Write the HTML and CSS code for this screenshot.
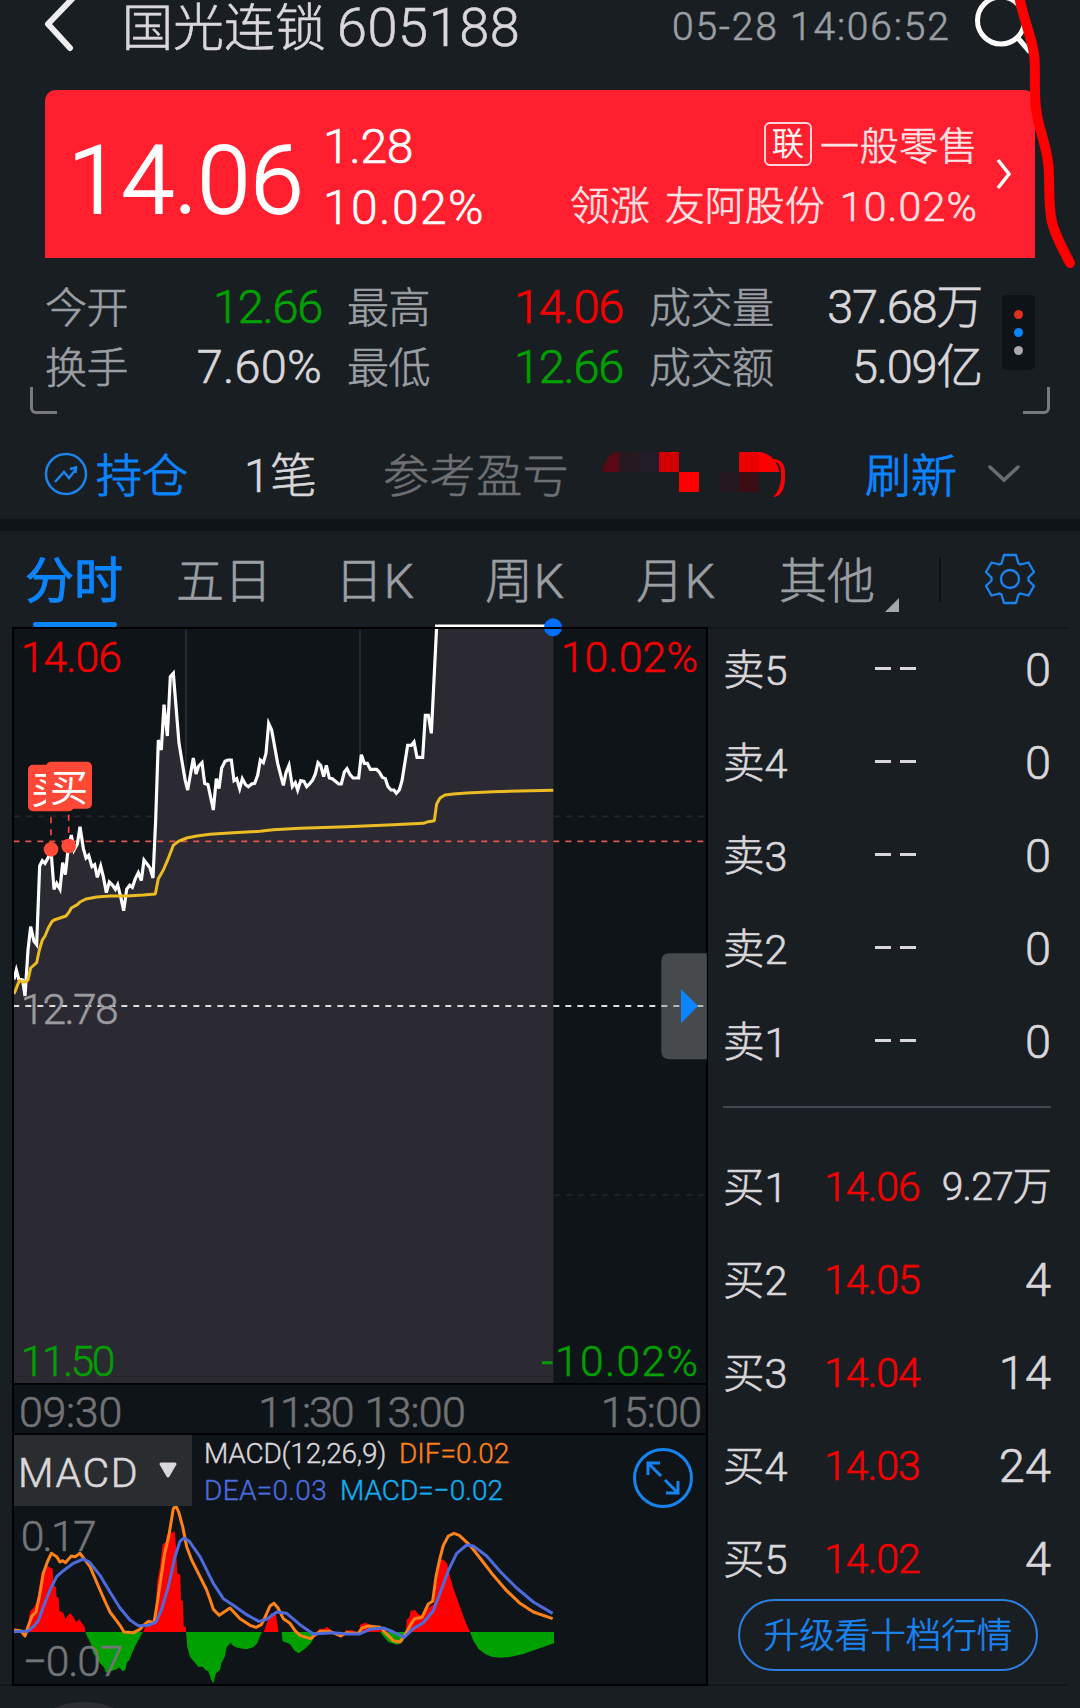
FILE: index.html
```
<!DOCTYPE html>
<html lang="zh-CN">
<head>
  <meta charset="UTF-8" />
  <meta name="viewport" content="width=device-width, initial-scale=1.0" />
  <title>国光连锁 605188</title>
  <link rel="stylesheet" href="styles.css">
</head>
<body>
  <div class="page">
    <header class="topbar">
      <svg class="back" viewBox="0 0 34 60"><path d="M30 -2 L5 24 L27 48" /></svg>
      <h1 class="name">国光连锁</h1>
      <span class="code">605188</span>
      <span class="time">05-28 14:06:52</span>
      <svg class="search" viewBox="0 0 62 60"><circle cx="27" cy="20.5" r="23.5" /><path d="M43 37 L56 52" /></svg>
    </header>

    <section class="quote">
      <div class="price">14.06</div>
      <div class="change">
        <span class="diff">1.28</span>
        <span class="pct">10.02%</span>
      </div>
      <div class="sector">
        <div class="sector-row"><span class="tag">联</span><span class="sector-name">一般零售</span></div>
        <div class="sector-row lead"><span>领涨</span><span>友阿股份</span><span class="lead-pct">10.02%</span></div>
      </div>
      <svg class="arrow" viewBox="0 0 18 34"><path d="M3 3 L14 17 L3 31" /></svg>
    </section>

    <section class="stats">
      <div class="stats-grid">
        <span class="label">今开</span><span class="val green">12.66</span>
        <span class="label">最高</span><span class="val red">14.06</span>
        <span class="label">成交量</span><span class="val">37.68万</span>
        <span class="label">换手</span><span class="val turnover">7.60%</span>
        <span class="label">最低</span><span class="val green">12.66</span>
        <span class="label">成交额</span><span class="val">5.09亿</span>
      </div>
      <div class="more"><i class="dot-red"></i><i class="dot-blue"></i><i class="dot-grey"></i></div>
      <i class="corner corner-left"></i>
      <i class="corner corner-right"></i>
    </section>

    <section class="position">
      <svg class="hold-icon" viewBox="0 0 42 42">
        <circle cx="21" cy="21" r="20" />
        <path d="M10 29 L19 19 L24 25 L31 16 M25 16 L31 14.500 L30.500 20" />
      </svg>
      <span class="hold">持仓</span>
      <span class="count">1笔</span>
      <span class="profit">参考盈亏</span>
      <svg class="mosaic" viewBox="0 0 186 46">
        <path fill="#5a0814" d="M0 21 Q5 1 17 1 V21 Z" />
        <path fill="#261920" d="M17 1h20v20H17z" />
        <path fill="#231d2a" d="M37 1h20v20H37z" />
        <path fill="#d20000" d="M57 1h20v20H57z" />
        <path fill="#ff0000" d="M77 21h20v20H77z" />
        <path fill="#261820" d="M117 21h20v20h-20z" />
        <path fill="#3a0d14" d="M137 21h20v20h-20z" />
        <path fill="#ea0000" d="M137 1h20v20h-20z" />
        <path fill="#ff0000" d="M157 1 Q167 2 171 8 Q183 8 183 22 Q184 45 171 46 Q180 38 179 22 Q179 12 173 11 Q177 15 177 21 H157 Z" />
      </svg>
      <span class="refresh">刷新</span>
      <svg class="down" viewBox="0 0 34 20"><path d="M3 3 L17 16 L31 3" /></svg>
    </section>

    <nav class="tabs">
      <a class="tab active">分时</a>
      <a class="tab tab-5d">五日</a>
      <a class="tab tab-k">日K</a>
      <a class="tab tab-wk">周K</a>
      <a class="tab tab-mk">月K</a>
      <a class="tab tab-other">其他</a>
      <i class="tab-split"></i>
      <svg class="gear" viewBox="-26 -26 52 52">
        <path d="M-6 -24 H6 L8.500 -15.500 L10.500 -14.500 L18.500 -16.500 L24 -7 L18.500 -1.500 V1.500 L24 7 L18.500 16.500 L10.500 14.500 L8.500 15.500 L6 24 H-6 L-8.500 15.500 L-10.500 14.500 L-18.500 16.500 L-24 7 L-18.500 1.500 V-1.500 L-24 -7 L-18.500 -16.500 L-10.500 -14.500 L-8.500 -15.500 Z" />
        <circle r="9" />
      </svg>
    </nav>

    <main class="main">
      <div class="charts">
        <!-- 分时图, 3 units per pixel -->
        <svg class="trend" viewBox="36 21 2088 2274">
          <rect class="panel" x="39" y="24" width="2082" height="2268" />
          <path class="grid" d="M558 28V1500 M1080 28V1500" />
          <path class="grid-dash" d="M42 589H2112 M42 1725H2112" />
          <path class="area" d="M42,1078 49,1050 56,1076 68,1080 75,1128 84,990 92,920 102,964 110,974 119,738 127,722 135,730 145,712 153,690 162,808 170,790 180,808 188,728 196,764 204,690 214,645 222,690 232,672 240,620 250,685 258,714 266,706 276,740 284,734 292,772 302,738 310,770 319,818 328,786 338,796 346,808 353,794 362,830 371,872 380,808 389,796 397,802 406,776 415,758 424,782 432,720 440,730 450,744 459,774 467,600 475,360 484,390 492,254 502,348 511,170 520,160 537,370 555,478 563,510 580,414 588,462 596,438 606,428 614,490 624,494 640,570 649,476 657,506 665,444 675,424 684,420 694,420 702,482 710,476 719,506 727,476 737,494 745,500 755,492 764,490 773,466 781,420 790,428 798,400 806,310 815,330 833,430 850,496 858,458 867,436 877,500 886,488 893,510 902,482 912,484 920,500 930,490 938,480 946,462 954,428 962,436 971,470 979,436 988,474 997,476 1016,492 1024,492 1033,456 1041,446 1050,464 1059,474 1076,474 1084,404 1093,430 1102,430 1111,448 1130,448 1139,458 1147,472 1156,476 1164,500 1173,510 1182,510 1189,520 1198,510 1206,482 1223,376 1234,376 1242,366 1251,412 1268,412 1276,286 1285,286 1294,340 1310,18 1660,18 1660,2289 42,2289Z" />
          <path class="cost-line" d="M42 664H2112" />
          <path class="base-line" d="M42 1158H2112" />
          <path class="price-line" d="M42,1078 49,1050 56,1076 68,1080 75,1128 84,990 92,920 102,964 110,974 119,738 127,722 135,730 145,712 153,690 162,808 170,790 180,808 188,728 196,764 204,690 214,645 222,690 232,672 240,620 250,685 258,714 266,706 276,740 284,734 292,772 302,738 310,770 319,818 328,786 338,796 346,808 353,794 362,830 371,872 380,808 389,796 397,802 406,776 415,758 424,782 432,720 440,730 450,744 459,774 467,600 475,360 484,390 492,254 502,348 511,170 520,160 537,370 555,478 563,510 580,414 588,462 596,438 606,428 614,490 624,494 640,570 649,476 657,506 665,444 675,424 684,420 694,420 702,482 710,476 719,506 727,476 737,494 745,500 755,492 764,490 773,466 781,420 790,428 798,400 806,310 815,330 833,430 850,496 858,458 867,436 877,500 886,488 893,510 902,482 912,484 920,500 930,490 938,480 946,462 954,428 962,436 971,470 979,436 988,474 997,476 1016,492 1024,492 1033,456 1041,446 1050,464 1059,474 1076,474 1084,404 1093,430 1102,430 1111,448 1130,448 1139,458 1147,472 1156,476 1164,500 1173,510 1182,510 1189,520 1198,510 1206,482 1223,376 1234,376 1242,366 1251,412 1268,412 1276,286 1285,286 1294,340 1310,18 1660,18" />
          <path class="avg-line" d="M42,1122 58,1082 68,1086 78,1085 84,1080 92,1044 110,1028 118,990 127,960 135,948 145,924 155,906 162,900 180,894 198,888 206,878 214,864 232,854 240,846 258,837 290,831 330,828 380,828 430,825 466,822 475,776 490,750 505,715 520,676 535,664 560,654 590,648 630,643 700,638 780,634 820,629 900,625 1040,620 1180,614 1270,610 1285,605 1303,602 1310,552 1320,534 1335,525 1360,522 1400,519 1480,515 1660,511" />
          <circle class="last" cx="1659" cy="22" r="27" />
          <path class="frame" d="M39 24H2121V2292H39Z" />
          <!-- 买入点 -->
          <path class="buy-stem" d="M153 592V666 M206 584V656" />
          <circle class="buy" cx="153" cy="688" r="22" /><circle class="buy" cx="206" cy="678" r="22" />
          <rect class="buy" x="84" y="434" width="138" height="140" rx="15" />
          <text class="buy-text" x="94" y="550">买</text>
          <rect class="buy" x="138" y="425" width="138" height="141" rx="15" />
          <text class="buy-text" x="150" y="543">买</text>

          <text class="tick red" x="62" y="155" textLength="304">14.06</text>
          <text class="tick red" x="1682" y="155" textLength="412">10.02%</text>
          <text class="tick mid" x="62" y="1212" textLength="294">12.78</text>
          <text class="tick green" x="62" y="2267" textLength="284">11.50</text>
          <text class="tick green" x="1624" y="2267" textLength="470">-10.02%</text>
          <path class="handle" d="M2121 1000H2009Q1984 1000 1984 1025V1293Q1984 1318 2009 1318H2121Z" />
          <path class="handle-arrow" d="M2043 1107L2094 1158L2043 1210Z" />
        </svg>

        <div class="axis"><span>09:30</span><span class="t-mid">11:30</span><span class="t-mid2">13:00</span><span class="t-end">15:00</span></div>

        <div class="macd">
          <svg class="macd-chart" viewBox="36 219 2088 759">
            <rect class="panel" x="39" y="222" width="2082" height="753" />
            <path class="down-bars" d="M256,816 262,830 272,850 280,880 290,895 300,910 312,922 318,938 350,928 358,922 368,934 376,930 380,910 388,900 396,880 404,862 412,846 420,832 428,816Z M558,816 562,862 570,890 585,908 595,920 608,920 616,930 625,934 634,960 640,970 648,940 660,930 664,910 674,890 680,862 692,848 700,858 715,864 740,868 760,862 772,850 780,828 786,816Z M845,816 848,844 870,852 884,872 896,880 915,866 930,852 940,838 946,816Z M1140,816 1150,828 1165,846 1190,854 1208,846 1216,830 1218,816Z M1410,816 1420,842 1435,866 1455,882 1475,890 1500,893 1530,891 1570,882 1610,868 1662,850 1662,816Z" />
            <path class="up-bars" d="M75,816 84,790 90,755 102,742 112,720 118,680 125,636 136,636 142,618 158,626 160,676 168,682 170,712 176,712 178,752 190,758 196,778 204,766 212,760 222,774 228,786 238,778 246,790 254,800 256,816Z M430,816 436,800 460,796 466,760 472,664 480,620 488,552 497,548 500,524 520,516 524,514 528,560 532,640 541,644 543,720 549,724 551,798 558,802 558,816Z M792,816 796,800 806,776 814,758 828,764 832,790 836,816Z M955,816 958,806 972,806 982,800 992,810 1000,816Z M1036,816 1038,811 1060,811 1062,816Z M1078,816 1080,794 1096,788 1110,794 1130,798 1144,816Z M1218,816 1220,780 1228,772 1232,752 1246,750 1254,762 1270,768 1282,748 1292,738 1302,732 1310,660 1318,610 1324,598 1334,602 1342,612 1350,650 1360,684 1370,712 1380,740 1390,768 1400,794 1410,816Z" />
            <text class="tick scale" x="62" y="574" textLength="228">0.17</text>
            <text class="tick scale" x="68" y="949" textLength="302">−0.07</text>
            <path class="dif-line" d="M42,810 62,812 75,828 84,800 96,768 108,756 118,710 130,640 142,606 154,580 170,590 180,606 188,602 196,608 214,588 226,590 240,580 252,596 270,620 300,690 316,726 330,756 360,796 372,816 400,818 420,808 430,796 445,784 462,788 470,740 482,660 494,580 506,530 516,470 520,446 528,438 536,456 548,500 560,560 575,600 600,650 620,690 632,724 640,748 658,766 690,744 720,776 750,796 768,802 784,794 796,770 810,738 822,730 834,744 850,776 870,790 885,812 900,826 932,836 946,824 960,814 990,814 1022,828 1040,818 1075,820 1086,804 1105,798 1140,802 1158,820 1180,842 1200,846 1214,826 1232,794 1244,776 1266,772 1285,732 1298,724 1308,650 1320,594 1330,556 1345,528 1362,520 1378,526 1410,556 1440,594 1480,646 1520,692 1560,730 1600,756 1658,776" />
            <path class="dea-line" d="M42,815 84,813 100,800 115,782 130,740 150,690 170,650 190,632 220,610 250,597 268,606 300,646 330,696 360,744 390,780 415,797 445,796 468,786 484,750 505,680 525,590 540,544 552,534 568,544 600,590 640,670 670,716 700,736 740,764 776,784 800,778 830,756 860,760 900,794 940,822 1000,818 1040,822 1078,822 1110,808 1150,804 1180,816 1212,832 1240,806 1270,788 1300,752 1320,700 1345,632 1370,580 1400,555 1420,558 1460,588 1500,634 1550,684 1600,726 1658,760" />
            <path class="frame" d="M39 222H2121V975H39Z" />
          </svg>
          <div class="macd-head">
            <div class="macd-select"><span>MACD</span><svg viewBox="0 0 20 17"><path d="M3 2H17L10 14Z" /></svg></div>
            <div class="legend">
              <div><span class="l-name">MACD(12,26,9)</span><span class="l-dif">DIF=0.02</span></div>
              <div><span class="l-dea">DEA=0.03</span><span class="l-macd">MACD=−0.02</span></div>
            </div>
            <svg class="expand" viewBox="-30 -30 60 60">
              <circle r="28.500" />
              <path d="M-2 -2L-15 -15M-15 -3V-15H-3M2 2L15 15M15 3V15H3" />
            </svg>
          </div>
        </div>
      </div>

      <aside class="book">
        <div class="row"><span>卖5</span><i class="none"></i><b>0</b></div>
        <div class="row"><span>卖4</span><i class="none"></i><b>0</b></div>
        <div class="row"><span>卖3</span><i class="none"></i><b>0</b></div>
        <div class="row"><span>卖2</span><i class="none"></i><b>0</b></div>
        <div class="row"><span>卖1</span><i class="none"></i><b>0</b></div>
        <hr>
        <div class="row"><span>买1</span><em>14.06</em><b class="long">9.27万</b></div>
        <div class="row"><span>买2</span><em>14.05</em><b>4</b></div>
        <div class="row"><span>买3</span><em>14.04</em><b>14</b></div>
        <div class="row"><span>买4</span><em>14.03</em><b>24</b></div>
        <div class="row"><span>买5</span><em>14.02</em><b>4</b></div>
        <a class="upgrade">升级看十档行情</a>
      </aside>
    </main>

    <i class="float-btn"></i>

    <svg class="scribble" viewBox="0 0 80 280"><path d="M19 -4 C23 18 33 40 34.500 58 C35.500 76 34 92 36 108 C38 128 46 142 48.500 166 C50 186 48 205 52 222 C55 235 62 248 70 263" /></svg>
  </div>
</body>
</html>
```
FILE: styles.css
```
* { box-sizing: border-box }
body { margin: 0; background: #191e22; color: #dad7db; font-family: Roboto, "Noto Sans CJK SC", sans-serif; font-weight: 300; -webkit-text-stroke: .6px }
svg { display: block; fill: none; overflow: visible; flex: none }
h1 { margin: 0; font-weight: 300 }
.page { position: relative; width: 1080px; height: 1708px; overflow: hidden; display: flex; flex-direction: column; white-space: nowrap }
.red { color: #f50000; fill: #f50000; stroke: #f50000 }
.green { color: #00a000; fill: #00a000; stroke: #00a000 }

/* 顶部 */
.topbar { display: flex; align-items: center; height: 90px; padding: 0 0 36px 43px; line-height: 54px }
.topbar svg { height: 60px; align-self: flex-start }
.back { width: 34px; stroke: #efedf0; stroke-width: 6; stroke-linecap: round; stroke-linejoin: round }
.name { width: 210px; margin-left: 45px; padding-top: 3px; font-size: 51px }
.code { width: 183px; margin-left: 5px; padding-top: 1px; font-size: 54px; letter-spacing: .6px }
.time { width: 284px; margin-left: 152px; font-size: 39px; letter-spacing: 1.8px; color: #9b9ea3 }
.search { width: 62px; margin-left: 18px; stroke: #fff; stroke-width: 5 }

/* 现价 */
.quote { display: flex; align-items: center; width: 990px; height: 168px; margin-left: 45px; padding-left: 23px; background: #ff1f2e; border-radius: 11px 11px 0 0; color: #fff }
.price { width: 248px; font-size: 95px; line-height: 100px; letter-spacing: .5px; padding-top: 13px; -webkit-text-stroke: 1.800px }
.change { display: flex; flex-direction: column; width: 180px; margin-left: 7px; padding-top: 5px; font-size: 48px; line-height: 61px }
.diff { letter-spacing: -.3px }
.pct { letter-spacing: 1.400px }
.sector { flex: 1; display: flex; flex-direction: column; align-items: flex-end; padding-top: 5px; color: #ffe2e4; font-size: 39px; line-height: 60px }
.sector-row { display: flex; align-items: center; height: 60px }
.tag { width: 48px; height: 44px; margin: -5px 8px 0 0; border: 2px solid #ffd5d8; border-radius: 6px; color: #fff; font-size: 32px; line-height: 41px; text-align: center }
.sector-name { letter-spacing: .5px }
.lead { gap: 15px; font-size: 40px }
.lead-pct { font-size: 41px; letter-spacing: 1.200px }
.arrow { width: 18px; height: 34px; margin: 0 22px 0 17px; stroke: #fff; stroke-width: 3.500 }

/* 今开 最高 ... */
.stats { position: relative; display: flex; height: 156px; padding: 18px 45px 0 45px }
.stats-grid { display: grid; grid-template-columns: 100px 177px 102px 199px 140px 219px; grid-auto-rows: 60px; line-height: 60px; width: 937px }
.label { color: #9b9ea3; font-size: 42px; letter-spacing: -.5px; padding-top: 3px }
.val { padding-top: 1px; font-size: 47px; letter-spacing: -1.300px; text-align: right }
.turnover { letter-spacing: .2px }
.stats-grid .label:nth-child(6n+3) { padding-left: 25px }
.stats-grid .label:nth-child(6n+5) { padding-left: 26px }
.more { display: flex; flex-direction: column; align-items: center; justify-content: center; gap: 9px; width: 33px; height: 75px; margin: 19px 0 0 20px; border-radius: 5px; background: #0e1317 }
.more i { width: 9px; height: 9px; border-radius: 50% }
.dot-red { background: #e0311f }
.dot-blue { background: #0a84ff }
.dot-grey { background: #aba7b3 }
.corner { position: absolute; top: 129px; width: 27px; height: 27px; border: 3px solid #77797c; border-top: 0 }
.corner-left { left: 30px; border-right: 0; border-bottom-left-radius: 6px }
.corner-right { left: 1023px; border-left: 0; border-bottom-right-radius: 6px }

/* 持仓 */
.position { display: flex; align-items: center; height: 105px; padding: 15px 0 0 45px; font-size: 46px; line-height: 60px }
.position span { padding-top: 3px }
.hold-icon { width: 42px; height: 42px; stroke: #1c84ee; stroke-width: 2.500 }
.hold { width: 140px; margin-left: 9px; color: #0a84ff; -webkit-text-stroke: 1px }
.count { width: 148px; margin-left: 8px; font-size: 47px }
.profit { width: 200px; margin-left: -9px; color: #6e7073; letter-spacing: .6px }
.mosaic { width: 186px; height: 46px; margin-left: 19px }
.refresh { width: 100px; margin-left: 77px; color: #0a84ff; -webkit-text-stroke: 1px }
.down { width: 34px; height: 20px; margin-left: 22px; stroke: #696c70; stroke-width: 3.500; stroke-linecap: round }

/* 周期 */
.tabs { display: flex; align-items: center; height: 108px; border-top: 12px solid #0f1418; padding-left: 25px; font-size: 48px; line-height: 90px; color: #9b9ea3 }
.tab { position: relative; width: 100px; padding-top: 6px }
.tab.active { color: #0a84ff; font-weight: 400; font-size: 49px; -webkit-text-stroke: 1px }
.tab.active::after { content: ""; position: absolute; left: 8px; bottom: 0; width: 84px; height: 5px; border-radius: 3px; background: #0a84ff }
.tab-5d { width: 110px; margin-left: 51px }
.tab-k { margin-left: 49px; letter-spacing: .7px }
.tab-wk { margin-left: 50px; letter-spacing: .7px }
.tab-mk { margin-left: 51px; letter-spacing: .7px }
.tab-other { width: 122px; margin-left: 43px }
.tab-other::after { content: ""; position: absolute; right: 2px; bottom: 15px; border: 7.500px solid #a5a7ab; border-top-color: transparent; border-left-color: transparent }
.tab-split { width: 2px; height: 45px; margin-left: 38px; background: #0d1114 }
.gear { width: 52px; height: 52px; margin-left: 43px; stroke: #1c84ee; stroke-width: 2.300; stroke-linejoin: round }

/* 图表 */
.main { display: flex; width: 1068px; height: 1059px; padding-left: 12px; border-bottom: 2px solid #13171b }
.charts { width: 696px; flex: none }
.panel { fill: #0f1418 }
.frame { stroke: #000; stroke-width: 6 }
.trend { width: 696px; height: 758px }
.grid { stroke: #292d39; stroke-width: 5 }
.grid-dash { stroke: #24272a; stroke-width: 5; stroke-dasharray: 18 18 }
.area { fill: #2b2932 }
.cost-line { stroke: #e2544c; stroke-width: 5; stroke-dasharray: 18 18; stroke-dashoffset: 2 }
.base-line { stroke: #dcdcdc; stroke-width: 6; stroke-dasharray: 18 18; stroke-dashoffset: 2 }
.price-line { stroke: #fff; stroke-width: 9.500; stroke-linejoin: miter }
.avg-line { stroke: #ecbc24; stroke-width: 9; stroke-linejoin: round }
.last { fill: #006eff }
.buy { fill: #ff4936 }
.buy-stem { stroke: #ff4936; stroke-width: 5; stroke-dasharray: 18 18 }
.buy-text { fill: #fff; font-size: 114px; font-weight: 400 }
.tick { font-size: 128px; stroke-width: 1.500; -webkit-text-stroke: 0 }
.mid { fill: #9b9a9e; stroke: #9b9a9e }
.scale { fill: #737679; stroke: #737679 }
.handle { fill: #8a8b8e; fill-opacity: .45 }
.handle-arrow { fill: #0a84ff }
.axis { display: flex; height: 48px; padding-left: 5px; background: #0f1418; border: 2px solid #000; border-width: 0 2px; font-size: 43px; line-height: 54px; color: #727376; letter-spacing: -.3px }
.axis span { width: 106px }
.axis .t-mid { margin-left: 134px; letter-spacing: -2px }
.axis .t-mid2 { margin-left: 1px; letter-spacing: -.8px }
.axis .t-end { margin-left: 131px; letter-spacing: -.8px }

.macd { position: relative; height: 253px }
.macd-chart { position: absolute; left: 0; top: 0; width: 696px; height: 253px }
.up-bars { fill: #ff0000 }
.down-bars { fill: #00a000 }
.dif-line { stroke: #ff8219; stroke-width: 9; stroke-linejoin: round }
.dea-line { stroke: #4d6bdc; stroke-width: 9; stroke-linejoin: round }
.macd-head { position: relative; display: flex; padding: 2px 0 0 2px }
.macd-select { display: flex; align-items: center; width: 178px; height: 71px; padding: 4px 0 0 4px; background: #2a2d30; font-size: 41px; letter-spacing: 1.600px }
.macd-select span { width: 138px }
.macd-select svg { width: 20px; height: 17px; margin-left: 2px; margin-top: -4px; fill: #dad7db; stroke: #dad7db; stroke-width: 3; stroke-linejoin: round }
.legend { width: 364px; padding: 0 0 0 12px; font-size: 28px; line-height: 37px; -webkit-text-stroke: .4px }
.legend div { display: flex }
.l-name { width: 195px; color: #dad7db; letter-spacing: -.2px }
.l-dif { color: #ff7f1a }
.l-dea { width: 136px; color: #4a6ade; letter-spacing: .3px }
.l-macd { color: #12adf0 }
.expand { width: 60px; height: 60px; margin: 13px 0 0 77px; stroke: #1683f0; stroke-width: 3 }

/* 五档 */
.book { flex: 1; border-top: 2px solid #12161a; padding: 0 17px 0 15px }
.row { display: flex; align-items: center; height: 93px; margin-top: -6px; margin-bottom: 6px; line-height: 93px; font-size: 40px }
.row span { width: 101px; font-size: 41.500px; padding-top: 2px }
.row em { width: 98px; font-style: normal; font-size: 41px; color: #f50000; letter-spacing: -1px; padding-top: 2px }
.row b { flex: 1; text-align: right; font-size: 47px; font-weight: 300 }
.row .long { font-size: 39px; letter-spacing: -.8px; padding-top: 2px }
.none { width: 41px; height: 3px; margin: -3px 0 0 51px; background: linear-gradient(90deg, #dad7db 16px, transparent 16px 25px, #dad7db 25px) }
.book hr { height: 2px; margin: 18px 0 38px; border: 0; background: #424751 }
.upgrade { display: block; width: 300px; height: 72px; margin: -12px 0 0 15px; border: 2px solid #2c7fdf; border-radius: 36px; text-align: center; font-size: 35.500px; line-height: 70px; color: #1a84f0 }

.float-btn { position: absolute; left: 4px; top: 1702px; width: 160px; height: 160px; border-radius: 50%; background: #2c2e33 }
/* 手绘标记 */
.scribble { position: absolute; left: 1000px; top: 0; width: 80px; height: 280px; stroke: #ff0000; stroke-width: 10; stroke-linecap: round }
```
